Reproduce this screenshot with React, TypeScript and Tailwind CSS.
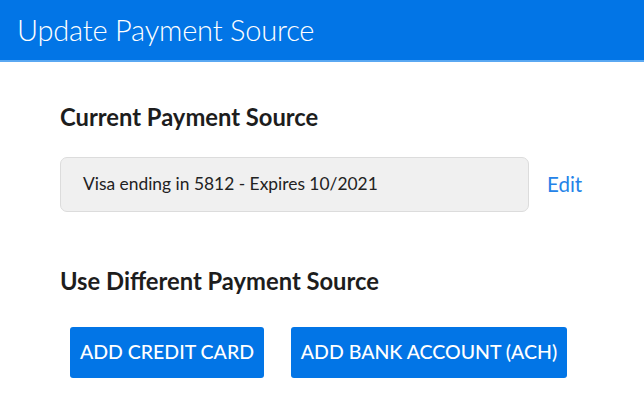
export default function App() {
  return (
    <div className="w-[644px] h-[398px] bg-white overflow-hidden font-['Lato',sans-serif]">
      <header className="h-[62px] bg-[#0275e6] border-b-2 border-[#5aa8f2] flex items-center pl-[17px]">
        <h1 className="text-white text-[29px] font-light tracking-[-0.2px]">Update Payment Source</h1>
      </header>

      <main className="pl-[60px] pt-[44px]">
        <h2 className="text-[#1d1d1d] text-[23.75px] font-bold leading-none">Current Payment Source</h2>

        <div className="flex items-center mt-[27px]">
          <div className="w-[469px] h-[55px] bg-[#f0f0f0] border border-[#dcdcdc] rounded-[7px] flex items-center pl-[22px] text-[#222] text-[17.4px]">
            Visa ending in 5812 - Expires 10/2021
          </div>
          <a href="#" className="ml-[18px] text-[#2583e8] text-[20.5px]">Edit</a>
        </div>

        <h2 className="text-[#1d1d1d] text-[23.75px] font-bold leading-none mt-[58px]">Use Different Payment Source</h2>

        <div className="flex gap-[27px] mt-[33px] pl-[10px]">
          <button className="w-[194px] h-[51px] bg-[#0275e6] text-white text-[19.5px] font-medium rounded-[3px]">
            ADD CREDIT CARD
          </button>
          <button className="w-[276px] h-[51px] bg-[#0275e6] text-white text-[19.5px] font-medium rounded-[3px]">
            ADD BANK ACCOUNT (ACH)
          </button>
        </div>
      </main>
    </div>
  );
}
